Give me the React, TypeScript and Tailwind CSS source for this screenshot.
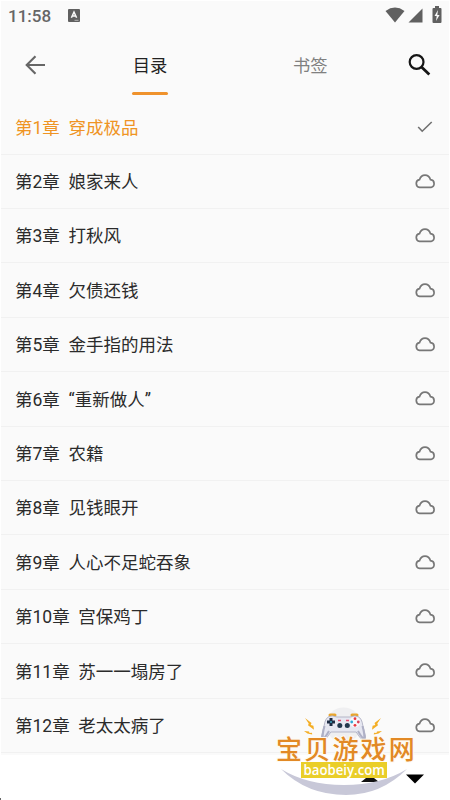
import React from "react";

const CHAPTERS = [
  "第1章  穿成极品",
  "第2章  娘家来人",
  "第3章  打秋风",
  "第4章  欠债还钱",
  "第5章  金手指的用法",
  "第6章  “重新做人”",
  "第7章  农籍",
  "第8章  见钱眼开",
  "第9章  人心不足蛇吞象",
  "第10章  宫保鸡丁",
  "第11章  苏一一塌房了",
  "第12章  老太太病了",
];

function StatusBar() {
  return (
    <div className="flex h-[30px] items-center pl-[7px] pr-[7px] text-[#666]">
      <span className="text-[17px] font-medium leading-none">11:58</span>
      <svg className="ml-[17px] -mt-px h-[13px] w-[12px]" viewBox="0 0 12 13">
        <rect width="12" height="13" rx="1" fill="#606060" />
        <path d="M3.4 8.8L6 3l2.6 5.8M4.3 7h3.4" fill="none" stroke="#fafafa" strokeWidth="1.5" />
        <path d="M6.5 11.3h4" stroke="#b5b5b5" strokeWidth="1" />
      </svg>
      <div className="-mt-[2px] ml-auto flex items-center">
        <svg className="h-[16px] w-[20px]" viewBox="0 0 20 16">
          <path d="M.5 4Q10-2.8 19.5 4L10 15.5Z" fill="#606060" />
        </svg>
        <svg className="ml-[3px] h-[15px] w-[15px]" viewBox="0 0 15 15">
          <path d="M14.5.5v14H.5Z" fill="#606060" />
        </svg>
        <svg className="-mt-[2px] ml-[9px] h-[17px] w-[10px]" viewBox="0 0 10 17">
          <path d="M3 0h4v2h1.5q1 0 1 1v13q0 1-1 1h-7q-1 0-1-1V3q0-1 1-1H3Z" fill="#606060" />
          <path d="M6 4L2.5 10H4.7L4 15l3.6-6H5.3Z" fill="#fafafa" />
        </svg>
      </div>
    </div>
  );
}

function Header() {
  return (
    <div className="flex h-[70px] items-start text-[17.3px]">
      <svg className="ml-[24px] mt-[24px] h-[21px] w-[21px] shrink-0" viewBox="0 0 21 21">
        <path d="M20 10H2M10.5 1.2L1.7 10l8.8 8.8" fill="none" stroke="#666" strokeWidth="2.1" />
      </svg>
      <div className="ml-[86px] flex w-[36px] flex-col items-center text-[#222]">
        <span className="mt-[22px] h-[26px] leading-[26px] whitespace-nowrap">目录</span>
        <span className="mt-[13px] h-[3px] w-[36px] rounded-full bg-[#ef922c]" />
      </div>
      <span className="ml-[125px] mt-[22px] w-[35px] leading-[26px] whitespace-nowrap text-[#808080]">书签</span>
      <svg className="ml-[79px] mt-[22px] h-[24px] w-[24px] shrink-0" viewBox="0 0 24 24">
        <circle cx="9.6" cy="9" r="6.9" fill="none" stroke="#151515" strokeWidth="2.2" />
        <path d="M14.5 14l7.8 7.5" stroke="#151515" strokeWidth="2.8" />
      </svg>
    </div>
  );
}

function CheckIcon() {
  return (
    <svg className="mr-[3px] h-[12px] w-[16px]" viewBox="0 0 16 12">
      <path d="M1.2 6l4 4.2L14.7 1" fill="none" stroke="#707070" strokeWidth="1.6" />
    </svg>
  );
}

function CloudIcon() {
  return (
    <svg className="h-[15px] w-[21px]" viewBox="0 0 21 15">
      <path
        d="M4.6 13.4A3.9 3.9 0 0 1 4.5 5.7Q6 1.2 10 1.2t5.5 4.5A3.9 3.9 0 0 1 16 13.4Z"
        fill="none"
        stroke="#777"
        strokeWidth="1.7"
        strokeLinejoin="round"
      />
    </svg>
  );
}

function Controller() {
  return (
    <svg className="absolute left-[17px] top-[7px] h-[40px] w-[100px]" viewBox="0 0 100 40">
      <circle cx="51.5" cy="18" r="17.5" fill="#efeff1" />
      <path d="M38 8h5M60 8h5" stroke="#e9a52d" strokeWidth="3" strokeLinecap="round" />
      <path d="M37 9.5Q40 8 45 10h13q5-2 8-.5 4 2 4.8 9L73.5 29q.4 6-2.6 4.5-3-2.5-6.7-8.5H38.8q-3.7 6-6.7 8.5-3 1.5-2.6-4.5l2.7-10.5Q33 11.5 37 9.5Z" fill="#e6e7f1" stroke="#9fa0b6" strokeWidth=".7" />
      <path d="M32.5 19Q30 28 31 32q2-1 6-8M70.5 19Q73 28 72 32q-2-1-6-8" fill="none" stroke="#aeb0c6" strokeWidth="2" />
      <path d="M39 11v8M35 15h8" stroke="#1c2b43" strokeWidth="3" />
      <circle cx="39" cy="15" r="1" fill="#42a8c5" />
      <circle cx="47.8" cy="18.5" r="2.5" fill="#22384e" />
      <circle cx="55.3" cy="18.5" r="2.5" fill="#22384e" />
      <path d="M46 13.5h3M54 13.5h3" stroke="#e64b70" strokeWidth="1.3" />
      <circle cx="63" cy="15" r="5.3" fill="#f7f7fc" />
      <circle cx="63" cy="11.7" r="1.4" fill="#e93942" />
      <circle cx="63" cy="18.3" r="1.4" fill="#e93942" />
      <circle cx="59.7" cy="15" r="1.4" fill="#31a9d6" />
      <circle cx="66.3" cy="15" r="1.4" fill="#d9425b" />
      <g fill="#f4ae25">
        <path d="M13 11l6.5 5-.8 2 2.7.8.6 4-6-4.5.7-1.8Z" />
        <path d="M12 24l5 .4.6 1.5 2.4-.1.2 1.8-4.7-1Z" />
        <path d="M89 11l-6.5 5 .8 2-2.7.8-.6 4 6-4.5-.7-1.8Z" />
        <path d="M90 24l-5 .4-.6 1.5-2.4-.1-.2 1.8 4.7-1Z" />
      </g>
    </svg>
  );
}

function Watermark() {
  return (
    <div className="absolute left-[275px] top-[700px] h-[100px] w-[142px]">
      <Controller />
      <svg className="absolute left-[5px] top-[67px] h-[29px] w-[130px]" viewBox="0 0 130 29">
        <path d="M1 2Q27 18 64 18T127 2Q101 28 66 28Q27 28 1 2Z" fill="#c8c8d8" />
      </svg>
      <span className="absolute left-px top-[35px] whitespace-nowrap font-['Noto_Sans_CJK_SC',sans-serif] text-[26px] font-medium leading-[26px] tracking-[2.2px] text-[#e28925] [paint-order:stroke] [-webkit-text-stroke:2px_#fffaf0]">
        宝贝游戏网
      </span>
      <div className="absolute left-[26px] top-[62px] flex h-[16px] w-[86px] items-center justify-center bg-[#eace29] font-['Open_Sans',sans-serif] text-[15px] font-semibold leading-none text-white">
        <span className="-mt-px origin-center scale-x-[0.88]">baobeiy.com</span>
      </div>
    </div>
  );
}

export default function App() {
  return (
    <div className="relative flex h-[800px] w-[450px] flex-col overflow-hidden bg-white font-['Roboto','Noto_Sans_CJK_SC',sans-serif]">
      <div className="ml-px mr-px mt-px bg-[#fafafa] pb-[2px]">
        <StatusBar />
        <Header />
        <div className="-mt-[0.8px]">
          {CHAPTERS.map((title, i) => (
            <div
              key={title}
              className={`flex h-[54.4px] items-center justify-between border-b border-[#f1f1f1] pl-[14px] pr-[13px] text-[17.5px] leading-[26px] whitespace-pre ${i === 0 ? "text-[#ef9423]" : "text-[#2b2b2b]"}`}
            >
              <span className="mt-[1.6px]">{title}</span>
              {i === 0 ? <CheckIcon /> : <CloudIcon />}
            </div>
          ))}
        </div>
      </div>
      <div className="relative flex flex-1 items-start bg-white">
        <svg className="ml-[361px] mt-[23px] h-[4px] w-[18px]" viewBox="0 0 18 4">
          <path d="M0 4l5-4h8l5 4Z" fill="#111" />
        </svg>
        <svg className="ml-[27px] mt-[19px] h-[10px] w-[18px]" viewBox="0 0 18 10">
          <path d="M0 .5h18L9 9.5Z" fill="#000" />
        </svg>
        <span className="absolute bottom-0 left-0 h-[2px] w-px bg-[#666]" />
      </div>
      <Watermark />
    </div>
  );
}
